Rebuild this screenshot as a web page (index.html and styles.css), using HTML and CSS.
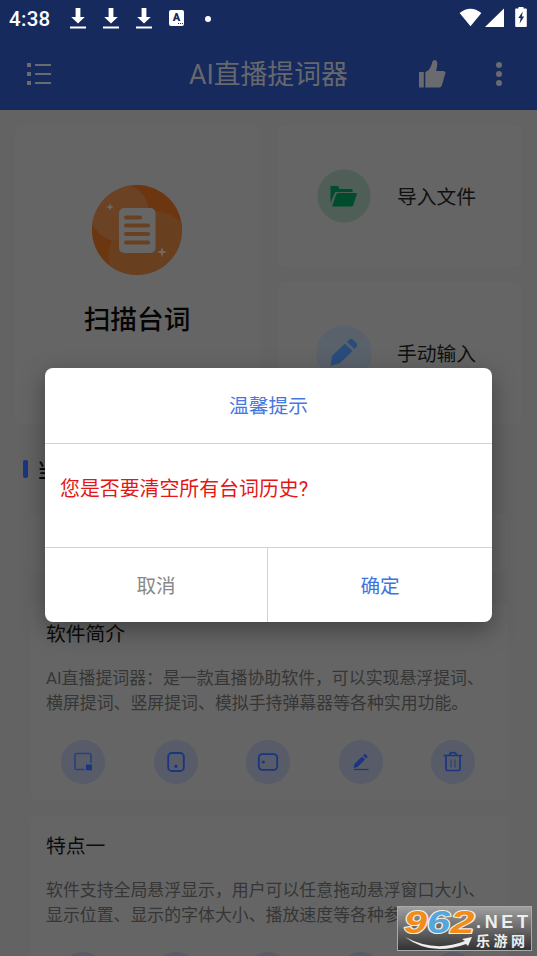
FILE: index.html
```html
<!DOCTYPE html>
<html lang="zh-CN">
<head>
<meta charset="utf-8">
<title>AI直播提词器</title>
<link rel="stylesheet" href="styles.css">
</head>
<body>
<svg width="0" height="0" class="defs">
  <symbol id="download" viewBox="0 0 16 22"><path fill="#fff" d="M5.600 0h4.800v9h4.400L8 15.600 1.200 9h4.400zM0 18.400h16v2H0z"/></symbol>
  <symbol id="window" viewBox="0 0 24 24"><path d="M20 13V5Q20 3.500 18.500 3.500h-13Q4 3.500 4 5v13Q4 19.500 5.500 19.500H14" fill="none" stroke="#2a4080" stroke-width="1.600"/><path d="M15 14.500h6v5.800h-6z" fill="#193680"/></symbol>
  <symbol id="portrait" viewBox="0 0 24 24"><rect x="4.200" y="3" width="15.600" height="18" rx="3.500" fill="none" stroke="#193680" stroke-width="1.800"/><circle cx="12" cy="16.300" r="1.600" fill="#193680"/></symbol>
  <symbol id="landscape" viewBox="0 0 24 24"><rect x="2.800" y="4.200" width="18.400" height="15.600" rx="3.500" fill="none" stroke="#193680" stroke-width="1.800"/><circle cx="7.300" cy="12" r="1.600" fill="#193680"/></symbol>
  <symbol id="edit" viewBox="0 0 24 24"><path d="M4.500 18l1-4L13 6.500l3 3L8.500 17zM14 5.500l1.200-1.200q.8-.6 1.600.2l1.400 1.400q.7.800 0 1.500L17 8.500z" fill="#193680"/><path d="M5 19.500h14.500" stroke="#193680" stroke-width="1.200"/></symbol>
  <symbol id="trash" viewBox="0 0 24 24"><path d="M2.500 5.500h19M8.500 5.500q0-3 3.500-3t3.500 3M5 5.500v13.500q0 1.500 1.500 1.500h11q1.500 0 1.500-1.500V5.500" fill="none" stroke="#193680" stroke-width="1.700"/><path d="M10 9.500v8M14 9.500v8" stroke="#2a4080" stroke-width="1.200"/></symbol>
</svg>
<div class="screen">
  <header class="top">
    <div class="status">
      <span class="clock">4:38</span>
      <svg class="dl"><use href="#download"/></svg>
      <svg class="dl"><use href="#download"/></svg>
      <svg class="dl"><use href="#download"/></svg>
      <span class="input-badge">A<svg viewBox="0 0 6 2"><path d="M0 0h1v1H0zM2 0h1v1H2zM4 0h1v1H4z"/></svg></span>
      <span class="dot"></span>
      <svg class="signals" viewBox="0 0 70 22" fill="#fff">
        <path d="M.6 6Q11.500-2.500 22.400 6L11.500 19.200z"/><path d="M45 1.500V20H26z"/>
        <path fill-rule="evenodd" d="M59.500 0h5v1.500H67q.8 0 .8.800V19q0 1-.8 1H57q-.8 0-.8-1V2.300q0-.8.800-.8h2.500zM63.800 4.500L59.300 11h2.300l-1 5.500 4.600-7h-2.400z"/>
      </svg>
    </div>
    <div class="bar">
      <svg class="list" viewBox="0 0 24 24"><path d="M0 0h4v4H0zM0 9h4v4H0zM0 18h4v4H0zM8 1h16v2H8zM8 10h16v2H8zM8 19h16v2H8z"/></svg>
      <h1>AI直播提词器</h1>
      <svg class="like" viewBox="0 0 27 28"><path d="M0 12h4.800v15.500H0zM6.300 12Q11.500 10 13 3q.5-3 2.800-3 3 .5 2.400 5l-1 6H24q3 0 2.300 2.500L23 25q-.7 2.500-3 2.500H6.300z"/></svg>
      <svg class="more" viewBox="0 0 8 24"><circle cx="4" cy="3" r="3"/><circle cx="4" cy="12" r="3"/><circle cx="4" cy="21" r="3"/></svg>
    </div>
  </header>

  <main>
    <section class="actions">
      <article class="card scan">
        <svg viewBox="0 0 90 90">
          <defs><clipPath id="disc"><circle cx="45" cy="45" r="45"/></clipPath></defs>
          <g clip-path="url(#disc)"><path fill="#6b3610" d="M0 0h90v90H0z"/>
          <path fill="#6b4223" d="M0 0h37q18 6 20 26-1 27-28 31Q10 57 0 39z"/>
          <path fill="#69401f" d="M57 26q21-1 34 13v51H20Q13 70 20 55L57 50z"/></g>
          <rect x="27" y="23" width="36.500" height="45" rx="5" fill="#666"/>
          <path d="M34 32.500h14M34 40.500h22M34 49h22M34 57.500h22" stroke="#694020" stroke-width="4" stroke-linecap="round"/>
          <path fill="#75695f" d="M18 18l1 3 3 1-3 1-1 3-1-3-3-1 3-1zM70 62l1.200 3.800L75 67l-3.800 1.200L70 72l-1.200-3.800L65 67l3.800-1.200z"/>
        </svg>
        <h2>扫描台词</h2>
      </article>
      <article class="card quick">
        <svg viewBox="0 0 54 54"><circle cx="27" cy="27" r="26.500" fill="#4f5e57"/><path fill="#004d2d" d="M13.500 34V17h7.500l1.500 3h12q1 0 1 1v2H19q-1 0-1.500 1.200zM15 37.500l4.200-12q.5-1.500 2-1.500H39q1.200 0 .8 1.200l-3.600 11q-.4 1.300-1.700 1.300z"/></svg>
        <span>导入文件</span>
      </article>
      <article class="card quick">
        <svg viewBox="0 0 54 54"><circle cx="27" cy="27" r="27.500" fill="#59616a"/><path fill="#294c7b" d="M13.500 40l1.500-10L28 17.500l7.500 7.500L23 37zM30 16l2.500-2.500q1.700-1.500 3.500.2l3.500 3.500q1.700 1.800.2 3.300L37.500 23z"/></svg>
        <span>手动输入</span>
      </article>
    </section>
    <h3 class="section-title">当</h3>
    <section class="feed">
      <div class="card blank"></div>
      <article class="card info">
        <h3>软件简介</h3>
        <p>AI直播提词器：是一款直播协助软件，可以实现悬浮提词、<br>横屏提词、竖屏提词、模拟手持弹幕器等各种实用功能。</p>
        <div class="tools">
          <i><svg><use href="#window"/></svg></i><i><svg><use href="#portrait"/></svg></i><i><svg><use href="#landscape"/></svg></i><i><svg><use href="#edit"/></svg></i><i><svg><use href="#trash"/></svg></i>
        </div>
      </article>
      <article class="card info">
        <h3>特点一</h3>
        <p>软件支持全局悬浮显示，用户可以任意拖动悬浮窗口大小、<br>显示位置、显示的字体大小、播放速度等各种参数</p>
        <div class="tools"><i></i><i></i><i></i><i></i><i></i></div>
      </article>
    </section>
  </main>

  <div class="dialog" role="dialog">
    <h2>温馨提示</h2>
    <p>您是否要清空所有台词历史?</p>
    <div class="buttons"><button>取消</button><button class="ok">确定</button></div>
  </div>

  <div class="watermark">
    <svg viewBox="0 0 135 45">
      <g font-family="Liberation Sans, sans-serif" font-weight="bold" font-style="italic" font-size="32" stroke="#f4eee6" stroke-width="2.200" paint-order="stroke" stroke-linejoin="round">
        <text x="7" y="27" textLength="23" lengthAdjust="spacingAndGlyphs" fill="#f28c1b">9</text>
        <text x="30" y="27" textLength="23" lengthAdjust="spacingAndGlyphs" fill="#55a6dc">6</text>
        <text x="53.500" y="27" textLength="24" lengthAdjust="spacingAndGlyphs" fill="#f28c1b">2</text>
      </g>
      <path d="M8 31q30 16 60 4l-3-2 10-2-4 9-2-2Q34 51 8 31z" fill="#eee"/>
      <text x="79" y="22" textLength="52" font-family="Liberation Sans, sans-serif" font-weight="bold" font-size="18" fill="#eee">.NET</text>
      <text x="79" y="39.500" textLength="49" font-family="Noto Sans CJK SC, sans-serif" font-weight="bold" font-size="14" fill="#eee">乐游网</text>
    </svg>
  </div>
</div>
</body>
</html>
```
FILE: styles.css
```css
* { box-sizing: border-box; }
body, h1, h2, h3, p { margin: 0; font-weight: 400; }
body { font-family: Roboto, "Noto Sans CJK SC", sans-serif; background: #636363; }
svg { display: block; flex: none; }
.defs { position: absolute; }
.screen { position: relative; width: 537px; height: 956px; overflow: hidden; }

.top { height: 110px; background: #162a5e; }
.status { display: flex; align-items: center; height: 37px; padding: 0 8px 0 9px; color: #fff; }
.clock { width: 61px; font-size: 20.500px; font-weight: 500; letter-spacing: .3px; }
.dl { width: 16px; height: 22px; margin: 1px 17px 0 0; }
.input-badge { position: relative; width: 15px; height: 16px; margin-bottom: 1px; border-radius: 2px; background: #fff; color: #162a5e; font-size: 11px; font-weight: 900; line-height: 15px; text-align: center; }
.input-badge svg { position: absolute; right: 0; bottom: 1px; width: 6px; height: 2px; fill: #162a5e; }
.dot { width: 6px; height: 6px; margin-left: 21px; border-radius: 50%; background: #fff; }
.signals { width: 70px; height: 22px; margin: 0 0 2px auto; }
.bar { display: flex; align-items: center; height: 73px; padding: 0 34px 0 27px; fill: #6a6b6e; }
.list { width: 24px; height: 24px; margin-top: 3px; }
.bar h1 { margin: 2px 0 0 138px; width: 160px; font-size: 26.800px; line-height: 36px; white-space: nowrap; color: #66686d; }
.like { width: 27px; height: 28px; margin: 1px 0 0 70px; }
.more { width: 8px; height: 24px; margin-left: auto; }

.card { background: #656565; border-radius: 7px; }
.actions { display: grid; grid-template: 142px 142px / 245px 245px; gap: 15px 17px; padding: 15px 15px 0; }
.scan { grid-row: 1 / 3; display: flex; flex-direction: column; align-items: center; padding: 60px 1px 0 0; }
.scan svg { width: 90px; height: 90px; }
.scan h2 { margin-top: 26px; font-size: 26.700px; font-weight: 500; line-height: 38px; color: #050505; }
.quick { display: flex; align-items: center; padding-left: 40px; }
.quick svg { width: 54px; height: 54px; overflow: visible; }
.quick span { margin: 0 0 2px 26px; font-size: 19.800px; color: #101010; }
.section-title { display: flex; align-items: center; height: 90px; padding-left: 23px; gap: 9px; font-size: 20px; font-weight: 500; color: #080808; }
.section-title::before { content: ""; width: 5px; height: 18px; border-radius: 2px; background: #193680; }
.feed { display: grid; gap: 15px; padding: 0 29px 0 30px; }
.blank { height: 59px; margin-bottom: 15px; }
.info { height: 197px; padding: 18px 16px 0; }
.info h3 { font-size: 19.800px; line-height: 28px; color: #0b0b0b; }
.info p { margin-top: 17px; font-size: 16.900px; line-height: 25px; white-space: nowrap; color: #363636; }
.tools { display: flex; justify-content: space-between; padding: 24px 17px 0 15px; }
.tools i { display: grid; place-items: center; width: 44px; height: 44px; border-radius: 50%; background: #585c68; }
.tools svg { width: 24px; height: 24px; }

.dialog { position: absolute; left: 45px; top: 368px; width: 447px; height: 254px; display: grid; grid-template-rows: 75px 105px 74px; border-radius: 8px; overflow: hidden; background: #fff; box-shadow: 0 8px 24px rgba(0, 0, 0, .35); }
.dialog h2 { padding-top: 1px; font-size: 19.800px; line-height: 75px; text-align: center; color: #4877df; }
.dialog p { padding: 31px 15px 0; border: solid #d3d3d3; border-width: 1px 0; font-size: 19.900px; line-height: 30px; color: #e51616; }
.buttons { display: grid; grid-template-columns: 222px 225px; }
.buttons button { border: 0; padding: 0 0 1px; background: none; font: inherit; font-size: 19.600px; color: #888; }
.buttons .ok { border-left: 1px solid #d3d3d3; color: #4173df; }

.watermark { position: absolute; left: 397px; top: 906px; width: 135px; height: 45px; outline: 1px solid #aaa; outline-offset: -1px; background: linear-gradient(rgba(165, 165, 165, .95), rgba(45, 45, 45, .95)); }
.watermark svg { width: 135px; height: 45px; }
```
